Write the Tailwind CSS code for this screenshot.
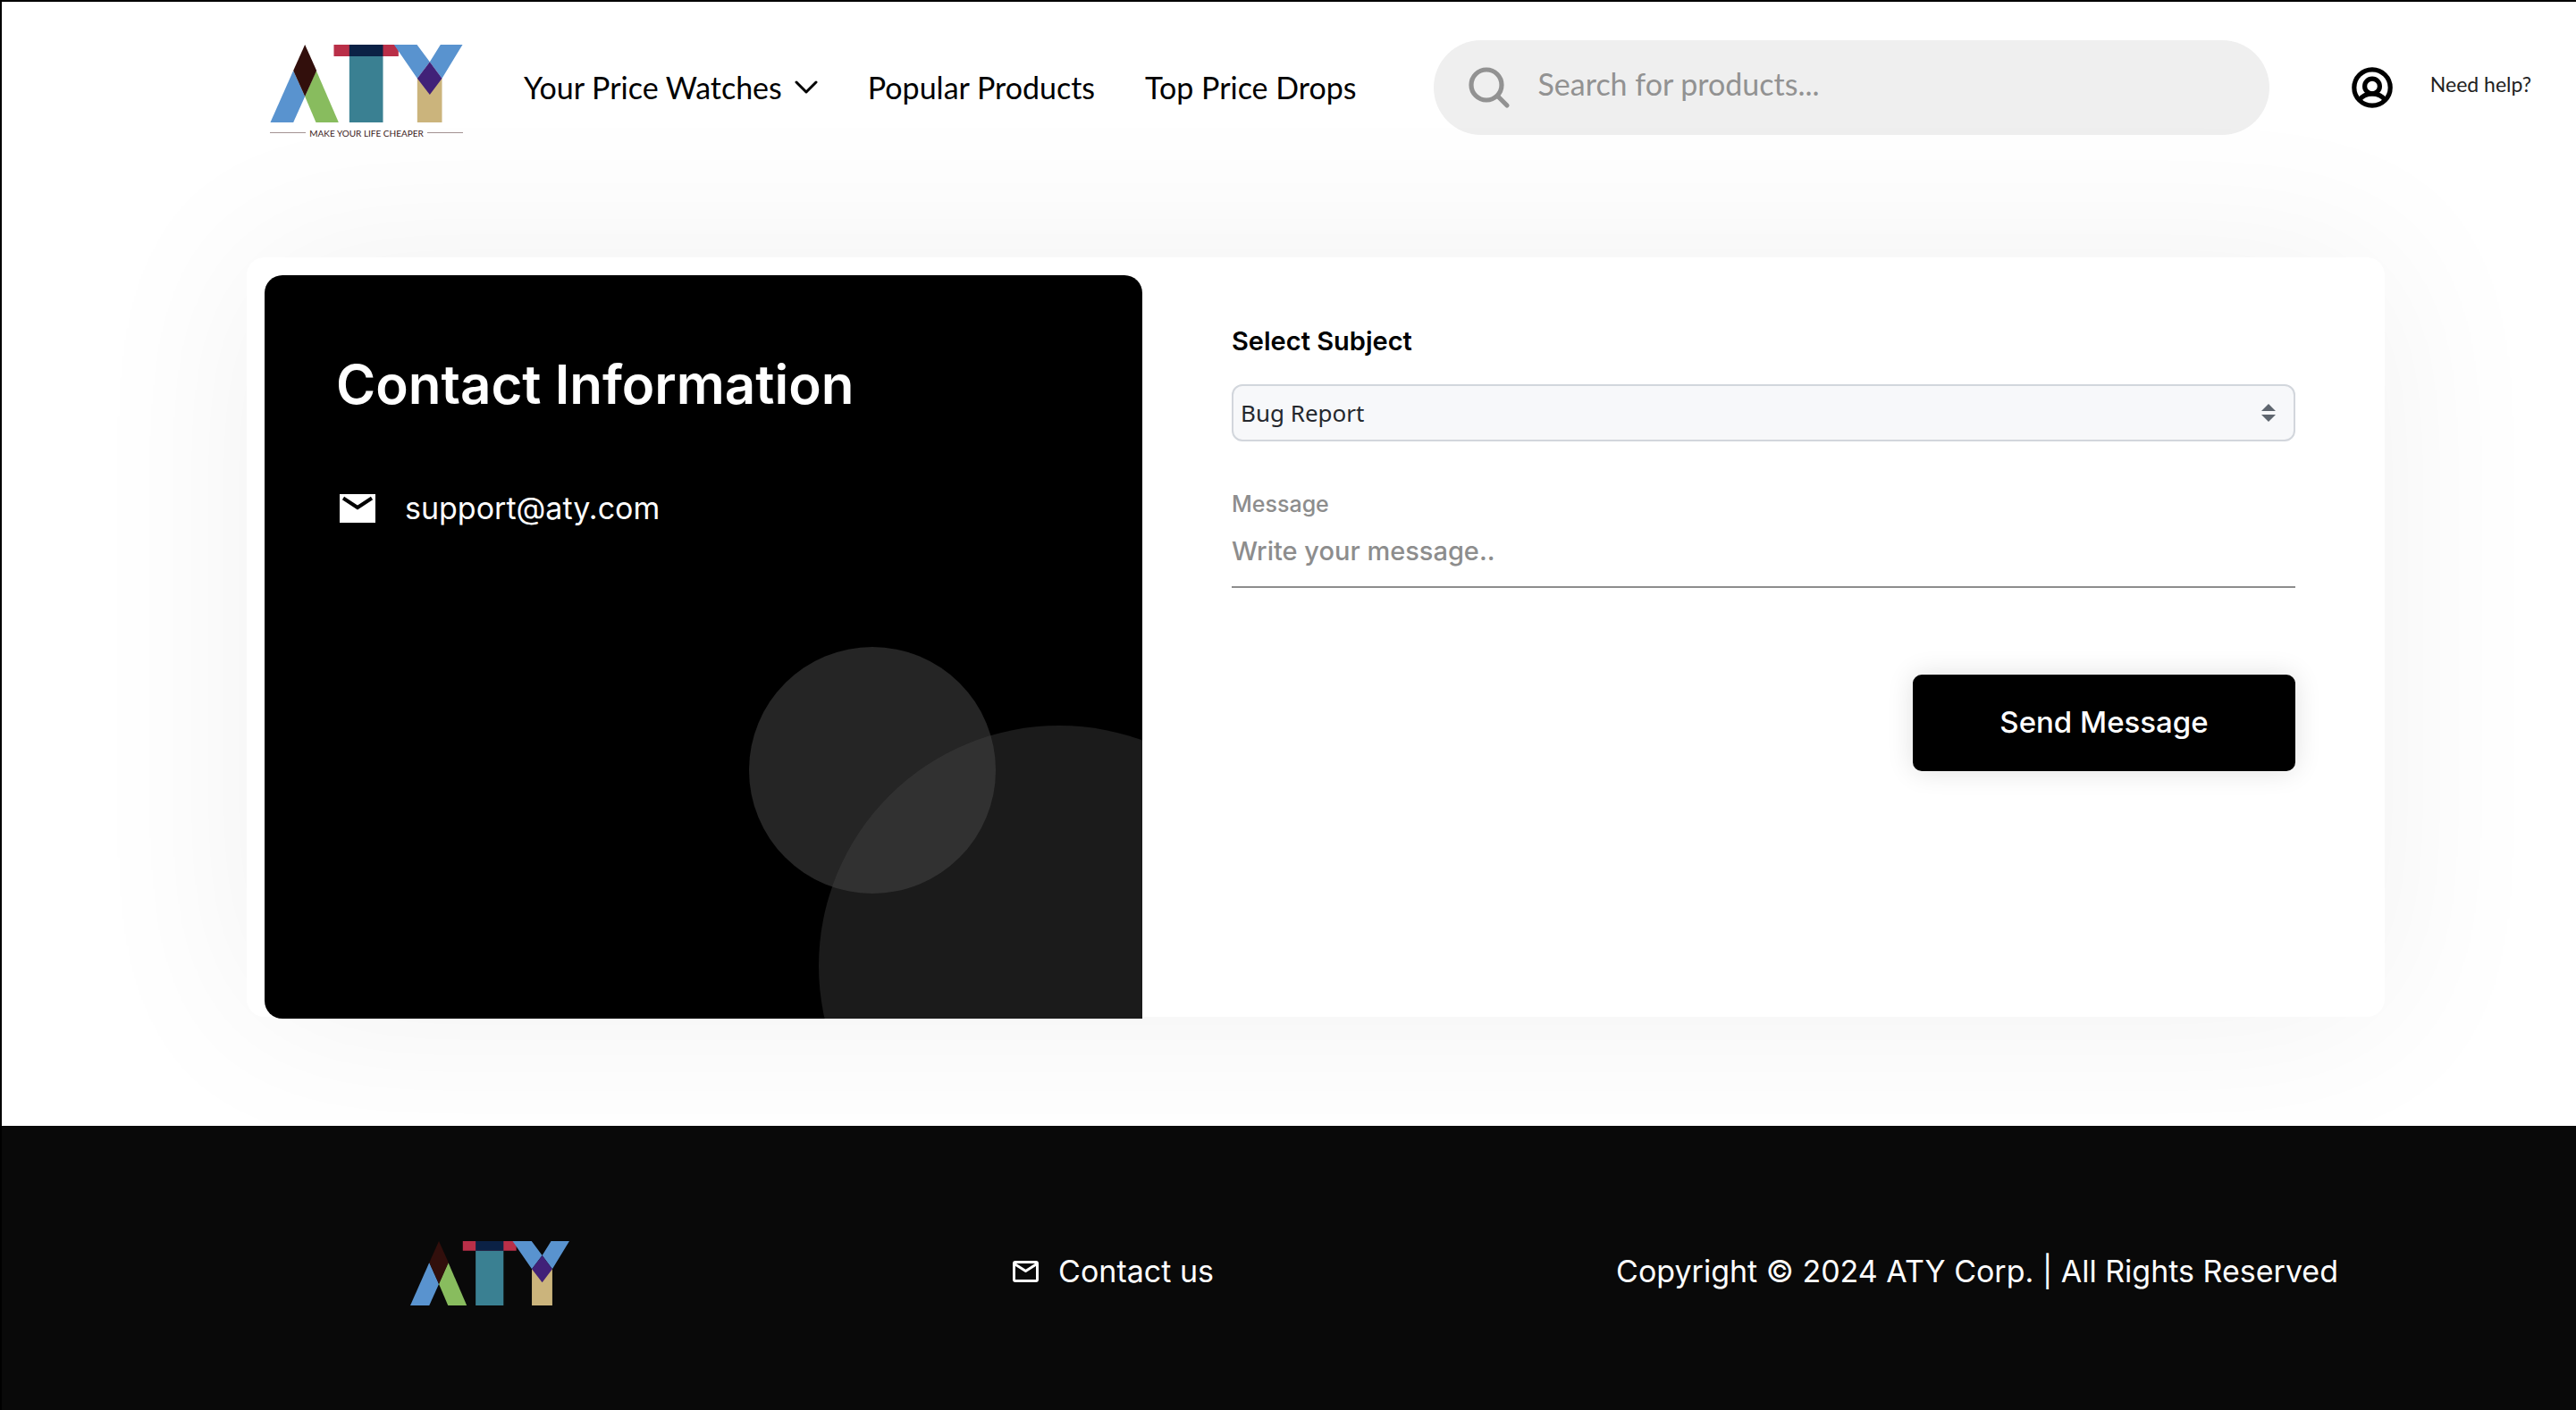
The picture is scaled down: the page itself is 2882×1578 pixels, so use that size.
<!DOCTYPE html>
<html lang="en">
<head>
<meta charset="utf-8">
<title>ATY - Contact us</title>
<script src="https://cdn.jsdelivr.net/npm/@tailwindcss/browser@4"></script>
</head>
<body class="flex min-h-screen flex-col border-t-2 border-l-2 border-black bg-white font-[Inter,sans-serif] text-black">

<svg class="hidden">
  <symbol id="aty" viewBox="0 0 645 261">
    <path fill="#5993cf" d="M77 87 116 174 77 261H0z"/>
    <path fill="#88bc5e" d="M154 87 229 261H153L116 174z"/>
    <path fill="#320f0c" d="M116 0 155 87 116 174 77 87z"/>
    <path fill="#b92f48" d="M213 0H430V39H213z"/>
    <path fill="#3a8092" d="M265 39H378V261H265z"/>
    <path fill="#0b2145" d="M265 0H378V39H265z"/>
    <path fill="#cbb47c" d="M493 113H576V261H493z"/>
    <path fill="#5993cf" d="M415 0H492L535 58 571 0H645L576 113 535 58 493 113z"/>
    <path fill="#412178" d="M535 58 576 113 535 168 493 113z"/>
  </symbol>
</svg>

<header class="flex h-[192px] items-center pr-[50px] pl-[300px] font-[Lato,sans-serif]">
  <a href="#" aria-label="ATY" class="mt-2 w-[216px] shrink-0">
    <svg class="h-[87px] w-full"><use href="#aty"/></svg>
    <span class="mt-1.5 flex h-3 items-center gap-1 text-[10px] leading-3 text-[#3b1a1a]">
      <span class="h-px flex-1 bg-[#a39393]"></span>MAKE YOUR LIFE CHEAPER<span class="h-px flex-1 bg-[#a39393]"></span>
    </span>
  </a>
  <nav class="ml-[68px] flex shrink-0 items-center gap-14 text-[34px] leading-10">
    <a href="#" class="flex items-center gap-3.5">Your Price Watches
      <svg class="h-4 w-[26px]" viewBox="0 0 26 16" fill="none" stroke="#000" stroke-width="3" stroke-linecap="round" stroke-linejoin="round"><path d="M2 2 13 13 24 2"/></svg>
    </a>
    <a href="#">Popular Products</a>
    <a href="#">Top Price Drops</a>
  </nav>
  <label class="ml-[86px] flex h-[106px] flex-1 items-center gap-[31px] rounded-full bg-[#efefef] pl-[38px]">
    <svg class="size-12 shrink-0" viewBox="0 0 48 48" fill="none" stroke="#929292" stroke-width="5.2" stroke-linecap="round"><circle cx="21" cy="21" r="17"/><path d="M33.500 33.500 44 44"/></svg>
    <input type="search" aria-label="Search" placeholder="Search for products..." class="mb-2 min-w-0 flex-1 bg-transparent text-[34px] leading-10 outline-none placeholder:text-[#929292]">
  </label>
  <a href="#" aria-label="Account" class="ml-[92px] shrink-0">
    <svg class="size-[46px]" viewBox="0 0 46 46" fill="none" stroke="#000" stroke-width="5.2"><circle cx="23" cy="23" r="20.200"/><circle cx="23" cy="21.500" r="8.400"/><path d="M8 37.500C11.500 32.500 17 29.800 23 29.800S34.500 32.500 38 37.500"/></svg>
  </a>
  <a href="#" class="mb-2 ml-[42px] shrink-0 text-[23px] leading-8 text-[#222]">Need help?</a>
</header>

<main class="pt-[94px] pr-[214px] pb-[122px] pl-[274px]">
  <section class="flex h-[850px] rounded-[20px] bg-white pt-5 pl-5 shadow-[0_0_200px_rgba(0,0,0,0.06)]">
    <div class="relative h-[832px] w-[982px] shrink-0 overflow-hidden rounded-[20px] rounded-br-none bg-black px-20 pt-[86px] text-white">
      <h1 class="text-[60px] leading-[72px] font-semibold">Contact Information</h1>
      <a href="#" class="mt-[81px] flex items-center gap-[33px] pl-1 text-[34px] leading-[44px]">
        <svg class="h-8 w-10" viewBox="0 0 40 32"><path fill="#fff" d="M0 0H40V32H0z"/><path d="M4 4.500 20 15 36 4.500" fill="none" stroke="#000" stroke-width="4"/></svg>
        support@aty.com
      </a>
      <div class="absolute -right-[176px] -bottom-[210px] size-[538px] rounded-full bg-[#1b1b1b]"></div>
      <div class="absolute right-[164px] bottom-[140px] size-[276px] rounded-full bg-[#464646]/52"></div>
    </div>
    <form class="flex flex-1 flex-col pt-[54px] pr-[100px] pl-[100px]">
      <label for="subject" class="text-[29px] leading-10 font-semibold">Select Subject</label>
      <div class="relative mt-7 font-['Noto_Sans',sans-serif]">
        <select id="subject" class="block h-16 w-full appearance-none rounded-xl border-2 border-[#d2d6dc] bg-[#f7f8fa] pl-2 text-[26px] text-[#25282e]"><option>Bug Report</option></select>
        <svg class="pointer-events-none absolute top-[22px] right-[22px] h-5 w-4" viewBox="0 0 16 20" fill="#5f666f"><path d="M8 0 16 8H0zM0 12H16L8 20z"/></svg>
      </div>
      <label for="message" class="mt-[54px] text-[25px] leading-8 font-medium text-[#8d8d8d]">Message</label>
      <input id="message" type="text" placeholder="Write your message.." class="h-[78px] border-b-2 border-[#8d8d8d] pb-1 text-[29px] font-medium outline-none placeholder:text-[#8d8d8d]">
      <button type="submit" class="mt-[97px] h-[108px] w-[428px] self-end rounded-[10px] bg-black text-[33px] font-medium text-white shadow-[0_0_30px_rgba(0,0,0,0.12)]">Send Message</button>
    </form>
  </section>
</main>

<footer class="flex flex-1 items-center justify-between bg-[#090909] pt-2 pr-[266px] pl-[457px] text-[34px] leading-[44px] text-white">
  <a href="#" aria-label="ATY" class="pt-1 pr-[46px]"><svg class="h-[72px] w-[178px]"><use href="#aty"/></svg></a>
  <a href="#" class="flex items-center gap-[22px]">
    <svg class="h-6 w-[29px]" viewBox="0 0 29 24" fill="none" stroke="#fff" stroke-width="3" stroke-linejoin="round"><rect x="1.500" y="1.500" width="26" height="21" rx="1.500"/><path d="M2 3.500 14.500 11.500 27 3.500"/></svg>
    Contact us
  </a>
  <p>Copyright © 2024 ATY Corp. | All Rights Reserved</p>
</footer>
</body>
</html>
